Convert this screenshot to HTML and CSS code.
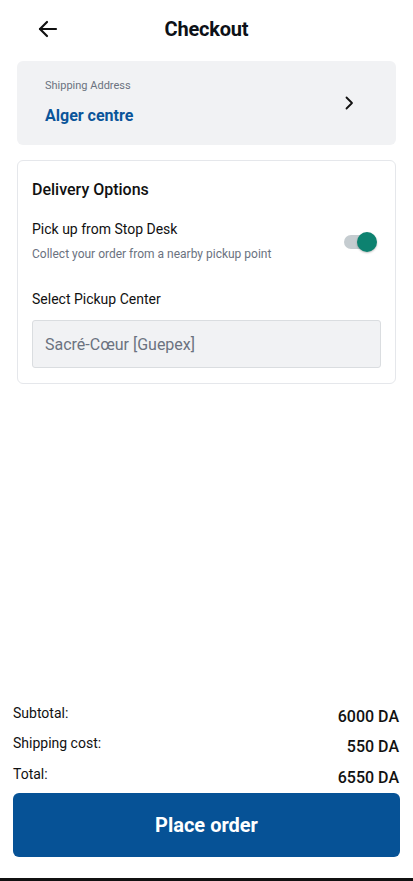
FILE: index.html
```html
<!DOCTYPE html>
<html lang="en">
<head>
  <meta charset="UTF-8">
  <meta name="viewport" content="width=device-width, initial-scale=1.0">
  <title>Checkout</title>
  <link rel="stylesheet" href="styles.css">
</head>
<body>
  <div class="screen">
    <header class="top-bar">
      <button class="back-btn" aria-label="Back">
        <svg width="24" height="24" viewBox="0 0 24 24" fill="none" stroke="#111" stroke-width="2.2" stroke-linecap="round" stroke-linejoin="round">
          <path d="M20 12H4"/>
          <path d="M11 5l-7 7 7 7"/>
        </svg>
      </button>
      <h1>Checkout</h1>
    </header>

    <section class="address-card">
      <div>
        <div class="address-label">Shipping Address</div>
        <div class="address-value">Alger centre</div>
      </div>
      <svg width="16" height="16" viewBox="0 0 16 16" fill="none" stroke="#111" stroke-width="1.8" stroke-linecap="round" stroke-linejoin="round">
        <path d="M5.5 2.5L11 8l-5.5 5.5"/>
      </svg>
    </section>

    <section class="delivery-card">
      <h2>Delivery Options</h2>
      <div class="option-row">
        <div>
          <div class="option-title">Pick up from Stop Desk</div>
          <div class="option-sub">Collect your order from a nearby pickup point</div>
        </div>
        <div class="toggle"><span class="thumb"></span></div>
      </div>
      <div class="field-label">Select Pickup Center</div>
      <div class="select-box">Sacré-Cœur [Guepex]</div>
    </section>

    <div class="spacer"></div>

    <section class="summary">
      <div class="sum-row"><span>Subtotal:</span><strong>6000 DA</strong></div>
      <div class="sum-row"><span>Shipping cost:</span><strong>550 DA</strong></div>
      <div class="sum-row"><span>Total:</span><strong>6550 DA</strong></div>
    </section>

    <button class="order-btn">Place order</button>
    <div class="nav-line"></div>
  </div>
</body>
</html>
```

FILE: styles.css
```css
body {
  margin: 0;
  font-family: Roboto, "Noto Sans", sans-serif;
  color: #111;
  background: #fff;
}

.screen {
  height: 881px;
  display: flex;
  flex-direction: column;
}

.top-bar {
  height: 58px;
  display: flex;
  align-items: center;
  position: relative;
}

.back-btn {
  position: absolute;
  left: 36px;
  top: 17px;
  background: none;
  border: none;
  padding: 0;
  display: flex;
}

.top-bar h1 {
  flex: 1;
  margin: 0;
  text-align: center;
  font-size: 20px;
  font-weight: 700;
  letter-spacing: -0.2px;
  color: #0d1117;
}

.address-card {
  margin: 3px 17px 0;
  height: 84px;
  background: #f1f2f4;
  border-radius: 6px;
  padding: 0 39px 0 28px;
  display: flex;
  align-items: center;
  justify-content: space-between;
}

.address-label {
  font-size: 11px;
  color: #6b7280;
  margin-top: -3px;
}

.address-value {
  font-size: 16px;
  font-weight: 700;
  color: #0a559a;
  margin-top: 14px;
}

.delivery-card {
  margin: 15px 17px 0;
  border: 1px solid #e5e7eb;
  border-radius: 6px;
  padding: 19px 14px 15px;
}

.delivery-card h2 {
  margin: 0;
  font-size: 16px;
  font-weight: 500;
  color: #111;
}

.option-row {
  display: flex;
  align-items: center;
  justify-content: space-between;
  margin-top: 22px;
}

.option-title {
  font-size: 14px;
  color: #111;
}

.option-sub {
  font-size: 12px;
  color: #6b7280;
  margin-top: 10px;
}

.toggle {
  width: 28px;
  height: 14px;
  border-radius: 7px;
  background: #c5ccd0;
  position: relative;
  margin-right: 9px;
  margin-top: 2px;
}

.thumb {
  position: absolute;
  right: -5px;
  top: -3px;
  width: 20px;
  height: 20px;
  border-radius: 50%;
  background: #0d8270;
  box-shadow: 0 1px 2px rgba(0, 0, 0, 0.25);
}

.field-label {
  font-size: 14px;
  margin-top: 30px;
}

.select-box {
  margin-top: 13px;
  height: 48px;
  box-sizing: border-box;
  background: #f1f2f4;
  border: 1px solid #dadde0;
  border-radius: 3px;
  padding: 0 12px;
  display: flex;
  align-items: center;
  font-size: 16px;
  color: #6b7280;
}

.spacer {
  flex: 1;
}

.summary {
  padding: 0 14px 0 13px;
}

.sum-row {
  display: flex;
  justify-content: space-between;
  height: 30.5px;
  font-size: 14px;
}

.sum-row span {
  line-height: 16px;
  padding-top: 3px;
}

.sum-row strong {
  font-size: 16px;
  font-weight: 500;
  padding-top: 6px;
  line-height: 18px;
}

.order-btn {
  margin: 0 13px 21px;
  height: 64px;
  background: #065296;
  color: #fff;
  border: none;
  border-radius: 6px;
  font-family: Roboto, sans-serif;
  font-size: 20px;
  font-weight: 700;
}

.nav-line {
  height: 3px;
  background: #111;
}
```
